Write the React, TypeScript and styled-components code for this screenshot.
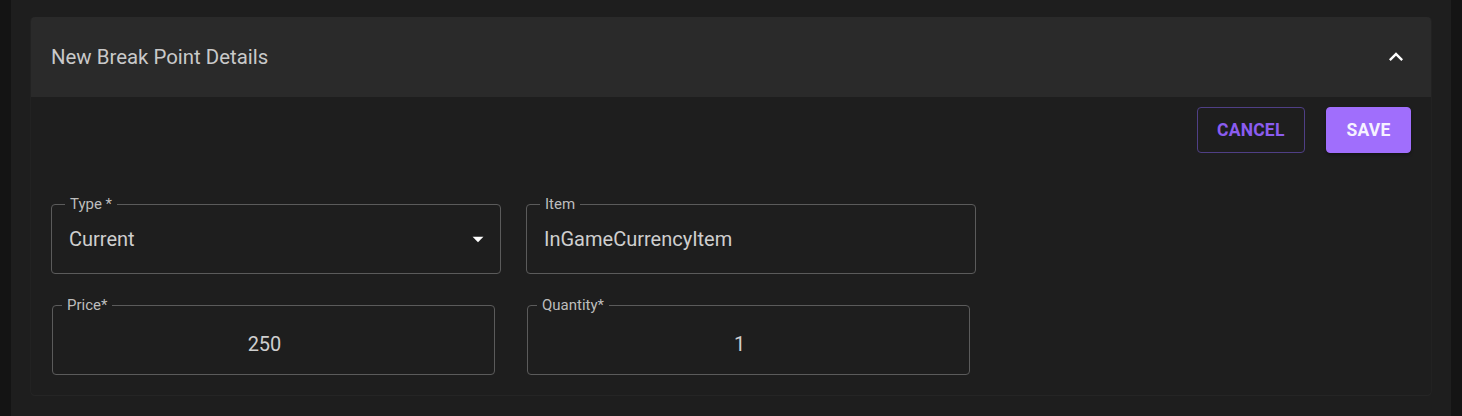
import { createGlobalStyle } from 'styled-components';
import styled from 'styled-components';

const Global = createGlobalStyle`
	html, body {
		margin: 0;
		background: #141414;
		font-family: Roboto, 'Liberation Sans', sans-serif;
	}
	* {
		box-sizing: border-box;
	}
`;

const Page = styled.div`
	display: flex;
	height: 416px;
	padding-left: 11px;
	padding-right: 11px;
	background: #141414;
`;

const Panel = styled.div`
	flex: 1;
	background: #1e1e1e;
	padding: 17px 20px 0 20px;
`;

const Accordion = styled.div`
	border-radius: 4px;
	background: #1e1e1e;
	box-shadow: 0 1px 1px rgba(255, 255, 255, 0.035), 1px 0 0 rgba(255, 255, 255, 0.02),
		-1px 0 0 rgba(255, 255, 255, 0.02);
`;

const Summary = styled.div`
	height: 80px;
	display: flex;
	align-items: center;
	justify-content: space-between;
	padding: 0 21px 0 20px;
	background: #2a2a2a;
	border-radius: 4px 4px 0 0;
	.title {
		font-size: 20.4px;
		color: #c9c9c9;
	}
	svg {
		display: block;
	}
`;

const Details = styled.div`
	padding: 10px 20px 20px 20px;
`;

const Actions = styled.div`
	display: flex;
	justify-content: flex-end;
	gap: 21px;
	margin-bottom: 43px;
`;

const Button = styled.button<{ $filled?: boolean }>`
	height: 46px;
	padding: 0 19.5px;
	border-radius: 4px;
	font-family: Roboto, 'Liberation Sans', sans-serif;
	font-size: 17.5px;
	font-weight: 700;
	letter-spacing: 0.2px;
	text-transform: uppercase;
	cursor: pointer;
	border: 1px solid ${(p) => (p.$filled ? '#a06efc' : '#4f3f85')};
	background: ${(p) => (p.$filled ? '#a06efc' : 'transparent')};
	color: ${(p) => (p.$filled ? '#f6f2ff' : '#8b5cf0')};
	box-shadow: ${(p) => (p.$filled ? '0 2px 3px rgba(0,0,0,0.3)' : 'none')};
`;

const Row = styled.div<{ $gap: number; $indent?: number }>`
	display: flex;
	gap: ${(p) => p.$gap}px;
	padding-left: ${(p) => p.$indent ?? 0}px;
	& + & {
		margin-top: 23px;
	}
`;

const Field = styled.fieldset<{ $width: number; $labelInset: number }>`
	width: ${(p) => p.$width}px;
	margin: 0;
	padding: 0 17px;
	border: 1px solid #5b5b5b;
	border-radius: 4px;
	min-width: 0;
	legend {
		margin-left: ${(p) => p.$labelInset - 22}px;
		padding: 0 5px;
		font-size: 15px;
		line-height: 16px;
		color: #bdbdbd;
	}
`;

const Value = styled.div<{ $center?: boolean }>`
	height: 61px;
	padding-bottom: ${(p) => (p.$center ? '0' : '7px')};
	display: flex;
	align-items: center;
	justify-content: ${(p) => (p.$center ? 'center' : 'space-between')};
	padding-right: ${(p) => (p.$center ? '18px' : '0')};
	font-size: 20px;
	color: #cfcfcf;
	svg {
		margin-right: -8px;
	}
`;

function App() {
	return (
		<Page>
			<Global />
			<Panel>
				<Accordion>
					<Summary>
						<span className="title">New Break Point Details</span>
						<svg width="28" height="28" viewBox="0 0 24 24" fill="#ffffff">
							<path d="M12 8l-6 6 1.41 1.41L12 10.83l4.59 4.58L18 14z" />
						</svg>
					</Summary>
					<Details>
						<Actions>
							<Button>Cancel</Button>
							<Button $filled>Save</Button>
						</Actions>
						<Row $gap={25}>
							<Field $width={450} $labelInset={18}>
								<legend>Type *</legend>
								<Value>
									<span>Current</span>
									<svg width="26" height="26" viewBox="0 0 24 24" fill="#ffffff">
										<path d="M7 10l5 5 5-5z" />
									</svg>
								</Value>
							</Field>
							<Field $width={450} $labelInset={18}>
								<legend>Item</legend>
								<Value>
									<span>InGameCurrencyItem</span>
								</Value>
							</Field>
						</Row>
						<Row $gap={32} $indent={1}>
							<Field $width={443} $labelInset={14}>
								<legend>Price*</legend>
								<Value $center>250</Value>
							</Field>
							<Field $width={443} $labelInset={14}>
								<legend>Quantity*</legend>
								<Value $center>1</Value>
							</Field>
						</Row>
					</Details>
				</Accordion>
			</Panel>
		</Page>
	);
}

export default App;
